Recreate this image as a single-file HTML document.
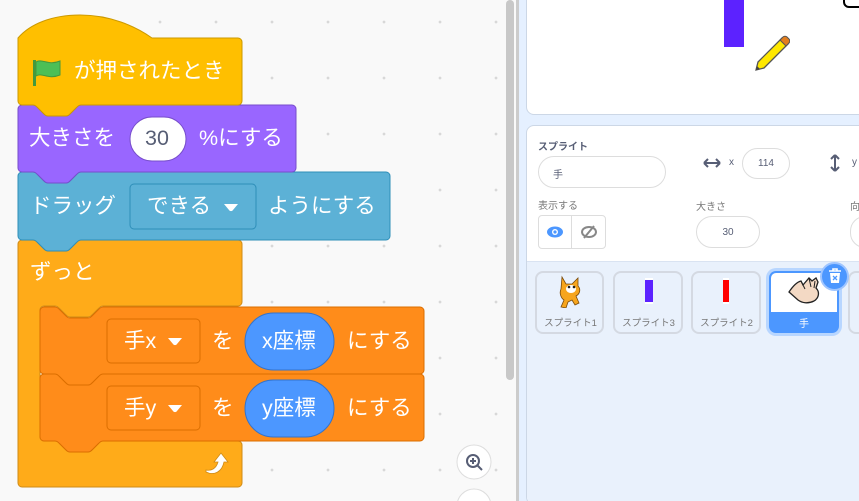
<!DOCTYPE html>
<html style="width:859px;height:501px;overflow:hidden"><head><meta charset="utf-8"><style>
*{margin:0;padding:0;box-sizing:border-box}
body{width:859px;height:501px;overflow:hidden;position:relative;font-family:"Liberation Sans","Noto Sans CJK JP",sans-serif;background:#E5F0FF}
#ws{position:absolute;left:0;top:0;width:516px;height:501px;background-color:#F9F9F9;background-image:radial-gradient(circle,#d8d8d8 1.2px,transparent 1.6px);background-size:56px 56px;background-position:20px -6px}
.abs{position:absolute}
.t{position:absolute;color:#fff;font-size:21.5px;white-space:nowrap;line-height:1}
</style></head><body>
<div id="ws"></div>
<svg class="abs" style="left:0;top:0" width="516" height="501">
<g stroke-width="1">
<path fill="#FFAB19" stroke="#CF8B17" d="M18,244 a4,4 0 0 1 4,-4 H33 c2,0 3,1 5,3 l5,5 c2,2 3,3 5,3 h18 c2,0 3,-1 5,-3 l5,-5 c2,-2 3,-3 5,-3 H238 a4,4 0 0 1 4,4 V302 a4,4 0 0 1 -4,4 H103 c-2,0 -3,1 -5,3 l-5,5 c-2,2 -3,3 -5,3 h-18 c-2,0 -3,-1 -5,-3 l-5,-5 c-2,-2 -3,-3 -5,-3 H44 a4,4 0 0 0 -4,4 V437 a4,4 0 0 0 4,4 H55 c2,0 3,1 5,3 l5,5 c2,2 3,3 5,3 h18 c2,0 3,-1 5,-3 l5,-5 c2,-2 3,-3 5,-3 H238 a4,4 0 0 1 4,4 V483 a4,4 0 0 1 -4,4 H22 a4,4 0 0 1 -4,-4 Z"/>
<path fill="#FF8C1A" stroke="#DB6E00" d="M40,378 a4,4 0 0 1 4,-4 H55 c2,0 3,1 5,3 l5,5 c2,2 3,3 5,3 h18 c2,0 3,-1 5,-3 l5,-5 c2,-2 3,-3 5,-3 H420 a4,4 0 0 1 4,4 V437 a4,4 0 0 1 -4,4 H103 c-2,0 -3,1 -5,3 l-5,5 c-2,2 -3,3 -5,3 h-18 c-2,0 -3,-1 -5,-3 l-5,-5 c-2,-2 -3,-3 -5,-3 H44 a4,4 0 0 1 -4,-4 Z"/>
<path fill="#FF8C1A" stroke="#DB6E00" d="M40,311 a4,4 0 0 1 4,-4 H55 c2,0 3,1 5,3 l5,5 c2,2 3,3 5,3 h18 c2,0 3,-1 5,-3 l5,-5 c2,-2 3,-3 5,-3 H420 a4,4 0 0 1 4,4 V370 a4,4 0 0 1 -4,4 H103 c-2,0 -3,1 -5,3 l-5,5 c-2,2 -3,3 -5,3 h-18 c-2,0 -3,-1 -5,-3 l-5,-5 c-2,-2 -3,-3 -5,-3 H44 a4,4 0 0 1 -4,-4 Z"/>
<path fill="#5CB1D6" stroke="#2E8EB8" d="M18,176 a4,4 0 0 1 4,-4 H33 c2,0 3,1 5,3 l5,5 c2,2 3,3 5,3 h18 c2,0 3,-1 5,-3 l5,-5 c2,-2 3,-3 5,-3 H386 a4,4 0 0 1 4,4 V236 a4,4 0 0 1 -4,4 H81 c-2,0 -3,1 -5,3 l-5,5 c-2,2 -3,3 -5,3 h-18 c-2,0 -3,-1 -5,-3 l-5,-5 c-2,-2 -3,-3 -5,-3 H22 a4,4 0 0 1 -4,-4 Z"/>
<path fill="#9966FF" stroke="#774DCB" d="M18,109 a4,4 0 0 1 4,-4 H33 c2,0 3,1 5,3 l5,5 c2,2 3,3 5,3 h18 c2,0 3,-1 5,-3 l5,-5 c2,-2 3,-3 5,-3 H292 a4,4 0 0 1 4,4 V168 a4,4 0 0 1 -4,4 H81 c-2,0 -3,1 -5,3 l-5,5 c-2,2 -3,3 -5,3 h-18 c-2,0 -3,-1 -5,-3 l-5,-5 c-2,-2 -3,-3 -5,-3 H22 a4,4 0 0 1 -4,-4 Z"/>
<path fill="#FFBF00" stroke="#CC9900" d="M18,38 C30,24 52,15 80,15 C110,15 135,26 152,38 H238 a4,4 0 0 1 4,4 V101 a4,4 0 0 1 -4,4 H81 c-2,0 -3,1 -5,3 l-5,5 c-2,2 -3,3 -5,3 h-18 c-2,0 -3,-1 -5,-3 l-5,-5 c-2,-2 -3,-3 -5,-3 H22 a4,4 0 0 1 -4,-4 Z"/>
</g>
<rect x="33" y="60" width="3" height="26" fill="#45993D"/>
<path d="M36,62 c6,-4 12,4 24,-1 v14 c-12,5 -18,-3 -24,1 Z" fill="#4CBF56" stroke="#45993D" stroke-width="1"/>
<rect x="130" y="117" width="56" height="44" rx="22" fill="#fff" stroke="#774DCB"/>
<rect x="130" y="184" width="126" height="45" rx="4" fill="#5CB1D6" stroke="#2E8EB8"/>
<path d="M224,204 h14 l-5,6 c-1,1.5 -3,1.5 -4,0 Z" fill="#fff"/>
<rect x="107" y="319" width="93" height="44" rx="4" fill="#FF8C1A" stroke="#DB6E00"/>
<path d="M168,338 h14 l-5,6 c-1,1.5 -3,1.5 -4,0 Z" fill="#fff"/>
<rect x="107" y="386" width="93" height="44" rx="4" fill="#FF8C1A" stroke="#DB6E00"/>
<path d="M168,405 h14 l-5,6 c-1,1.5 -3,1.5 -4,0 Z" fill="#fff"/>
<rect x="245" y="313" width="89" height="57" rx="28.5" fill="#4C97FF" stroke="#3373CC"/>
<rect x="245" y="380" width="89" height="57" rx="28.5" fill="#4C97FF" stroke="#3373CC"/>
<path d="M206,472 c8,4 16,0 18,-10 l4,0 -7,-9 -7,9 4,0 c-2,7 -7,9 -12,8 Z" fill="#fff" stroke="#CF8B17" stroke-width="0.8"/>
<rect x="506" y="0" width="8" height="380" rx="4" fill="#C8C8C8"/>
<circle cx="474" cy="462" r="17" fill="#fff" stroke="#ddd"/>
<circle cx="473" cy="461" r="6" fill="none" stroke="#575E75" stroke-width="2"/>
<path d="M477,465 l5,5 M470,461 h6 M473,458 v6" stroke="#575E75" stroke-width="2"/>
<circle cx="474" cy="506" r="17" fill="#fff" stroke="#ddd"/>
</svg>
<div class="t" style="left:74px;top:61px">が押されたとき</div>
<div class="t" style="left:29px;top:128px">大きさを</div>
<div class="t" style="left:145px;top:128px;color:#575E75">30</div>
<div class="t" style="left:199px;top:128px">%にする</div>
<div class="t" style="left:30px;top:196px">ドラッグ</div>
<div class="t" style="left:147px;top:196px">できる</div>
<div class="t" style="left:268px;top:196px">ようにする</div>
<div class="t" style="left:30px;top:262px">ずっと</div>
<div class="t" style="left:124px;top:331px">手x</div>
<div class="t" style="left:212px;top:331px">を</div>
<div class="t" style="left:262px;top:331px">x座標</div>
<div class="t" style="left:347px;top:331px">にする</div>
<div class="t" style="left:124px;top:398px">手y</div>
<div class="t" style="left:212px;top:398px">を</div>
<div class="t" style="left:262px;top:398px">y座標</div>
<div class="t" style="left:347px;top:398px">にする</div>

<div class="abs" style="left:516px;top:0;width:3px;height:501px;background:#ccc"></div>
<div class="abs" style="left:526px;top:-10px;width:345px;height:125px;background:#fff;border:1px solid #ccd7e6;border-radius:8px"></div>
<div class="abs" style="left:724px;top:0;width:20px;height:47px;background:#5C22FF"></div>
<svg class="abs" style="left:750px;top:32px" width="40" height="42"><path d="M6,38 l2,-8 24,-24 6,6 -24,24 Z" fill="#FFE800" stroke="#555" stroke-width="1.3"/><path d="M30,8 l3,-3 c1,-1 3,-1 4,0 l2,2 c1,1 1,3 0,4 l-3,3Z" fill="#E27E1F" stroke="#555"/><path d="M6,38 l1,-4 3,3Z" fill="#444"/></svg>
<div class="abs" style="left:843px;top:-6px;width:22px;height:14px;border:2px solid #000;border-radius:6px;background:#fff"></div>

<div class="abs" style="left:526px;top:125px;width:345px;height:380px;background:#fff;border:1px solid #ccd7e6;border-radius:8px;overflow:hidden"><div style="position:absolute;left:0;top:135px;width:345px;height:250px;background:#E9F1FC;border-top:1px solid #d9e3f2"></div></div>
<div class="abs" style="left:538px;top:138px;font-size:10px;font-weight:bold;color:#575E75">スプライト</div>
<div class="abs" style="left:538px;top:156px;width:128px;height:32px;border:1px solid #ddd;border-radius:16px;font-size:10px;color:#575E75;padding:9px 0 0 14px">手</div>
<svg class="abs" style="left:702px;top:157px" width="20" height="12"><path d="M2,6 h16 M2,6 l4,-4 M2,6 l4,4 M18,6 l-4,-4 M18,6 l-4,4" stroke="#575E75" stroke-width="2" fill="none"/></svg>
<div class="abs" style="left:729px;top:157px;font-size:10px;color:#575E75">x</div>
<div class="abs" style="left:742px;top:148px;width:48px;height:31px;border:1px solid #ddd;border-radius:16px;font-size:10px;color:#575E75;text-align:center;padding-top:9px">114</div>
<svg class="abs" style="left:829px;top:153px" width="12" height="20"><path d="M6,2 v16 M6,2 l-4,4 M6,2 l4,4 M6,18 l-4,-4 M6,18 l4,-4" stroke="#575E75" stroke-width="2" fill="none"/></svg>
<div class="abs" style="left:852px;top:157px;font-size:10px;color:#575E75">y</div>
<div class="abs" style="left:538px;top:197px;font-size:10px;color:#777">表示する</div>
<div class="abs" style="left:696px;top:198px;font-size:10px;color:#777">大きさ</div>
<div class="abs" style="left:850px;top:198px;font-size:10px;color:#777">向</div>
<div class="abs" style="left:538px;top:215px;width:68px;height:34px;border:1px solid #ddd;border-radius:4px;background:#fff"></div>
<div class="abs" style="left:571px;top:215px;width:1px;height:34px;background:#ddd"></div>
<svg class="abs" style="left:546px;top:224px" width="18" height="16"><ellipse cx="9" cy="8" rx="8" ry="5.5" fill="#4C97FF"/><circle cx="9" cy="8" r="3" fill="#fff"/><circle cx="9" cy="8" r="1.6" fill="#4C97FF"/></svg>
<svg class="abs" style="left:580px;top:223px" width="18" height="18"><ellipse cx="9" cy="9" rx="7" ry="5" fill="none" stroke="#888" stroke-width="2"/><path d="M4,15 L14,3" stroke="#888" stroke-width="2"/></svg>
<div class="abs" style="left:696px;top:216px;width:64px;height:32px;border:1px solid #ddd;border-radius:16px;font-size:10px;color:#575E75;text-align:center;padding-top:10px">30</div>
<div class="abs" style="left:850px;top:216px;width:30px;height:32px;border:1px solid #ddd;border-radius:16px"></div>

<div class="abs" style="left:535px;top:271px;width:69px;height:63px;border:2px solid #d4d9e2;border-radius:8px;background:#E9F1FC"></div>
<div class="abs" style="left:613px;top:271px;width:70px;height:63px;border:2px solid #d4d9e2;border-radius:8px;background:#E9F1FC"></div>
<div class="abs" style="left:691px;top:271px;width:70px;height:63px;border:2px solid #d4d9e2;border-radius:8px;background:#E9F1FC"></div>
<div class="abs" style="left:848px;top:271px;width:20px;height:63px;border:2px solid #d4d9e2;border-radius:8px;background:#E9F1FC"></div>
<div class="abs" style="left:766px;top:268px;width:76px;height:68px;border-radius:10px;background:#b8d6ff"></div>
<div class="abs" style="left:769px;top:271px;width:70px;height:62px;border-radius:7px;background:#4C97FF;overflow:hidden"><div style="height:39px;background:#fff;margin:0 2px;border-radius:5px 5px 0 0;margin-top:2px"></div></div>
<svg class="abs" style="left:553px;top:274px" width="34" height="34"><path d="M9,3 l4,7 6,0 6,-6 0,8 c3,3 2,8 -2,10 l3,7 -4,2 -3,-5 -4,2 -2,6 -5,-1 3,-7 c-3,-2 -5,-7 -3,-11 Z" fill="#F7A51C" stroke="#7a4a0a" stroke-width="0.8"/><ellipse cx="18" cy="15" rx="5" ry="4" fill="#fff"/><circle cx="16" cy="13" r="1.3" fill="#222"/><circle cx="21" cy="13" r="1.3" fill="#222"/></svg>
<div class="abs" style="left:645px;top:278px;width:8px;height:26px;background:#5C22FF;border-top:2px solid #fff;border-bottom:2px solid #fff"></div>
<div class="abs" style="left:723px;top:278px;width:6px;height:26px;background:#FF0000;border-top:2px solid #fff;border-bottom:2px solid #fff"></div>
<svg class="abs" style="left:786px;top:276px" width="36" height="30"><path d="M3,16 c4,-6 8,-10 12,-11 l2,4 6,-7 3,3 4,-3 2,4 -2,6 c4,4 3,10 -2,13 c-6,3 -12,2 -16,-1 Z" fill="#F3D9C4" stroke="#222" stroke-width="1.3"/><path d="M15,5 l4,8 M23,2 l2,9 M29,5 l-1,7" stroke="#222" stroke-width="1"/></svg>
<div class="abs" style="left:538px;top:315px;width:65px;text-align:center;font-size:9.5px;color:#777">スプライト1</div>
<div class="abs" style="left:616px;top:315px;width:65px;text-align:center;font-size:9.5px;color:#777">スプライト3</div>
<div class="abs" style="left:694px;top:315px;width:65px;text-align:center;font-size:9.5px;color:#777">スプライト2</div>
<div class="abs" style="left:771px;top:315px;width:66px;text-align:center;font-size:10px;color:#fff">手</div>
<div class="abs" style="left:820px;top:262px;width:29px;height:29px;border-radius:50%;background:#4C97FF;border:2px solid #9fc5ff"></div>
<svg class="abs" style="left:827px;top:268px" width="16" height="17"><path d="M2,3 h12 M6,3 v-2 h4 v2" stroke="#fff" stroke-width="1.6" fill="none"/><path d="M3,5 h10 l-1,10 h-8 Z" fill="#fff"/><path d="M6,8 l4,4 M10,8 l-4,4" stroke="#4C97FF" stroke-width="1.3"/></svg>
</body></html>
